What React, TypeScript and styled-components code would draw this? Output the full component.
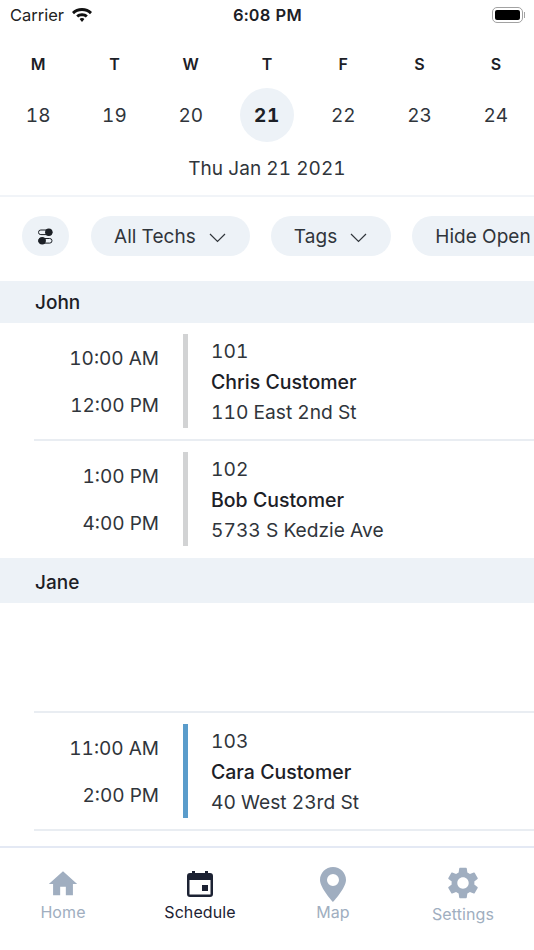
import React from 'react';
import styled, { createGlobalStyle } from 'styled-components';
import { MdHome, MdSettings } from 'react-icons/md';

const days = [
  { letter: 'M', date: 18 },
  { letter: 'T', date: 19 },
  { letter: 'W', date: 20 },
  { letter: 'T', date: 21, active: true },
  { letter: 'F', date: 22 },
  { letter: 'S', date: 23 },
  { letter: 'S', date: 24 },
];

type Job = { start: string; end: string; num: string; name: string; address: string; color: string };

const johnJobs: Job[] = [
  { start: '10:00 AM', end: '12:00 PM', num: '101', name: 'Chris Customer', address: '110 East 2nd St', color: '#d2d3d4' },
  { start: '1:00 PM', end: '4:00 PM', num: '102', name: 'Bob Customer', address: '5733 S Kedzie Ave', color: '#d2d3d4' },
];

const janeJobs: Job[] = [
  { start: '11:00 AM', end: '2:00 PM', num: '103', name: 'Cara Customer', address: '40 West 23rd St', color: '#5a9ccb' },
];

const JobRow = ({ job }: { job: Job }) => (
  <Row>
    <Times>
      <span>{job.start}</span>
      <span>{job.end}</span>
    </Times>
    <Bar $color={job.color} />
    <Details>
      <JobLine>{job.num}</JobLine>
      <JobName>{job.name}</JobName>
      <JobLine>{job.address}</JobLine>
    </Details>
  </Row>
);

const CalendarIcon = () => (
  <svg width="26" height="26" viewBox="0 0 26 26" fill="currentColor">
    <rect x="5" y="0" width="3" height="4" />
    <rect x="18" y="0" width="3" height="4" />
    <path fillRule="evenodd" d="M3 2h20a3 3 0 0 1 3 3v18a3 3 0 0 1-3 3H3a3 3 0 0 1-3-3V5a3 3 0 0 1 3-3zM2.500 9v14.500h21V9z" />
    <rect x="15" y="14" width="6" height="6" />
  </svg>
);

const PinIcon = () => (
  <svg width="26" height="35" viewBox="0 0 26 35" fill="currentColor">
    <path fillRule="evenodd" d="M13 0C5.800 0 0 5.800 0 13c0 8 13 22 13 22s13-14 13-22C26 5.800 20.200 0 13 0zm0 7a6 6 0 1 1 0 12 6 6 0 0 1 0-12z" />
  </svg>
);

const App: React.FC = () => {
  return (
    <Phone>
      <GlobalStyle />
      <StatusBar>
        <Carrier>
          Carrier
          <svg width="22" height="16" viewBox="0 0 22 16">
            <path d="M11 1C7 1 3.600 2.500 1 5l2 2.200C5.100 5.200 7.900 4 11 4s5.900 1.200 8 3.200L21 5c-2.600-2.500-6-4-10-4z" fill="#111" />
            <path d="M11 6.200c-2.300 0-4.300.9-5.800 2.300l2 2.100c1-.9 2.300-1.400 3.800-1.400s2.800.5 3.800 1.400l2-2.100c-1.500-1.400-3.500-2.300-5.800-2.300z" fill="#111" />
            <path d="M11 11c-1 0-1.800.4-2.400 1l2.400 3 2.400-3c-.6-.6-1.400-1-2.400-1z" fill="#111" />
          </svg>
        </Carrier>
        <Clock>6:08 PM</Clock>
        <BatteryWrap>
          <Battery>
            <BatteryFill />
          </Battery>
          <BatteryNub />
        </BatteryWrap>
      </StatusBar>

      <Week>
        {days.map((d, i) => (
          <Day key={i}>
            <Letter>{d.letter}</Letter>
            <DateCircle $active={d.active}>{d.date}</DateCircle>
          </Day>
        ))}
      </Week>
      <FullDate>Thu Jan 21 2021</FullDate>

      <Filters>
        <IconPill>
          <svg width="15" height="17" viewBox="0 0 15 17">
            <rect x="0.500" y="2" width="13.500" height="4.600" rx="2.300" fill="none" stroke="#1c2026" strokeWidth="1" />
            <circle cx="10.800" cy="4.200" r="3.700" fill="#1c2026" />
            <rect x="0.500" y="10.500" width="13.500" height="4.600" rx="2.300" fill="none" stroke="#1c2026" strokeWidth="1" />
            <circle cx="4.200" cy="12.800" r="3.700" fill="#1c2026" />
          </svg>
        </IconPill>
        <Pill>
          All Techs
          <Chevron />
        </Pill>
        <Pill>
          Tags
          <Chevron />
        </Pill>
        <Pill>Hide Open</Pill>
      </Filters>

      <SectionHead $height={42}>John</SectionHead>
      {johnJobs.map((job, i) => (
        <React.Fragment key={job.num}>
          <JobRow job={job} />
          {i === 0 && <Divider />}
        </React.Fragment>
      ))}

      <SectionHead $height={45} $offset={3}>Jane</SectionHead>
      <EmptySlot />
      <Divider />
      {janeJobs.map(job => (
        <JobRow key={job.num} job={job} />
      ))}
      <Divider />

      <TabBar>
        <Tab>
          <IconSlot>
            <MdHome size={34} />
          </IconSlot>
          <TabLabel>Home</TabLabel>
        </Tab>
        <Tab $active>
          <IconSlot>
            <CalendarIcon />
          </IconSlot>
          <TabLabel>Schedule</TabLabel>
        </Tab>
        <Tab>
          <IconSlot>
            <PinIcon />
          </IconSlot>
          <TabLabel>Map</TabLabel>
        </Tab>
        <Tab>
          <IconSlot $nudge={-1}>
            <MdSettings size={38} />
          </IconSlot>
          <TabLabel $low>Settings</TabLabel>
        </Tab>
      </TabBar>
    </Phone>
  );
};

const Chevron = () => (
  <ChevronIcon width="17" height="10" viewBox="0 0 17 10">
    <path d="M1 1l7.500 7.500L16 1" fill="none" stroke="#30353b" strokeWidth="1.200" />
  </ChevronIcon>
);

export default App;

const GlobalStyle = createGlobalStyle`
  html, body {
    margin: 0;
    padding: 0;
    background: #fff;
  }
  * {
    box-sizing: border-box;
  }
`;

const Phone = styled.div`
  width: 534px;
  height: 950px;
  overflow: hidden;
  display: flex;
  flex-direction: column;
  font-family: Inter, 'Liberation Sans', sans-serif;
  font-variant-numeric: tabular-nums;
  color: #1c2026;
  background: #fff;
`;

const StatusBar = styled.div`
  height: 30px;
  flex: none;
  display: flex;
  align-items: center;
  justify-content: space-between;
  padding: 0 9px 0 10px;
`;

const Carrier = styled.div`
  width: 120px;
  display: flex;
  align-items: center;
  gap: 7px;
  font-size: 16.500px;
  color: #222;
`;

const Clock = styled.div`
  font-size: 16.500px;
  font-weight: 600;
  letter-spacing: 0.3px;
`;

const BatteryWrap = styled.div`
  width: 120px;
  display: flex;
  align-items: center;
  justify-content: flex-end;
  gap: 1px;
`;

const Battery = styled.div`
  width: 31px;
  height: 16px;
  padding: 2px;
  border: 1px solid #a2a2a2;
  border-radius: 5px;
`;

const BatteryFill = styled.div`
  height: 100%;
  background: #000;
  border-radius: 2px;
`;

const BatteryNub = styled.div`
  width: 1px;
  height: 6px;
  background: #a2a2a2;
`;

const Week = styled.div`
  display: grid;
  grid-template-columns: repeat(7, 1fr);
  padding-top: 24px;
  flex: none;
`;

const Day = styled.div`
  display: flex;
  flex-direction: column;
  align-items: center;
`;

const Letter = styled.div`
  height: 20px;
  line-height: 20px;
  font-size: 16px;
  font-weight: 600;
`;

const DateCircle = styled.div<{ $active?: boolean }>`
  width: 54px;
  height: 54px;
  margin-top: 14px;
  border-radius: 50%;
  display: flex;
  align-items: center;
  justify-content: center;
  font-size: 19px;
  font-weight: ${p => (p.$active ? 700 : 400)};
  letter-spacing: ${p => (p.$active ? '0.6px' : '0')};
  color: ${p => (p.$active ? '#1c2026' : '#30353b')};
  background: ${p => (p.$active ? '#edf2f7' : 'transparent')};
`;

const FullDate = styled.div`
  flex: none;
  height: 55px;
  padding-top: 15px;
  line-height: 24px;
  text-align: center;
  font-size: 19px;
  letter-spacing: 0.05px;
  color: #30353b;
  border-bottom: 2px solid #f1f4f8;
`;

const Filters = styled.div`
  flex: none;
  height: 84px;
  padding: 19px 0 0 22px;
  display: flex;
  align-items: flex-start;
  gap: 21px;
  overflow: hidden;
`;

const Pill = styled.div`
  flex: none;
  height: 40px;
  padding: 0 23px;
  display: flex;
  align-items: center;
  gap: 13px;
  border-radius: 20px;
  background: #edf2f7;
  font-size: 19px;
  letter-spacing: 0.05px;
  color: #30353b;
  white-space: nowrap;
`;

const IconPill = styled(Pill)`
  width: 47px;
  margin-right: 1px;
  padding: 0;
  justify-content: center;
`;

const ChevronIcon = styled.svg`
  margin-top: 4px;
  margin-right: 1px;
`;

const SectionHead = styled.div<{ $height: number; $offset?: number }>`
  flex: none;
  height: ${p => p.$height}px;
  padding-left: 35px;
  padding-top: ${p => p.$offset ?? 0}px;
  display: flex;
  align-items: center;
  font-size: 19px;
  font-weight: 500;
  background: #edf2f7;
`;

const Row = styled.div`
  flex: none;
  height: 117px;
  padding: 11px 0 12px 35px;
  display: flex;
`;

const Times = styled.div`
  width: 124px;
  padding: 13px 0 11px;
  display: flex;
  flex-direction: column;
  justify-content: space-between;
  align-items: flex-end;
  font-size: 19px;
  line-height: 23px;
  color: #30353b;
`;

const Bar = styled.div<{ $color: string }>`
  width: 5px;
  margin-left: 24px;
  background: ${p => p.$color};
`;

const Details = styled.div`
  margin: 5px 0 4px 23px;
  display: flex;
  flex-direction: column;
  justify-content: space-between;
`;

const JobLine = styled.div`
  font-size: 19.200px;
  line-height: 24px;
  color: #30353b;
`;

const JobName = styled.div`
  font-size: 19.500px;
  line-height: 24px;
  font-weight: 500;
  color: #1c2026;
`;

const Divider = styled.div`
  flex: none;
  height: 2px;
  margin-top: -1px;
  margin-left: 34px;
  background: #e9edf2;
`;

const EmptySlot = styled.div`
  flex: none;
  height: 109px;
`;

const TabBar = styled.div`
  flex: none;
  margin-top: 15px;
  height: 104px;
  padding-top: 16px;
  display: grid;
  grid-template-columns: 126px 148px 118px 142px;
  border-top: 2px solid #e4e9f4;
`;

const Tab = styled.div<{ $active?: boolean }>`
  height: 70px;
  display: flex;
  flex-direction: column;
  align-items: center;
  color: ${p => (p.$active ? '#1c2233' : '#a0aec0')};
`;

const IconSlot = styled.div<{ $nudge?: number }>`
  height: 40px;
  flex: none;
  display: flex;
  align-items: center;
  justify-content: center;
  margin-top: ${p => p.$nudge ?? 0}px;
`;

const TabLabel = styled.span<{ $low?: boolean }>`
  line-height: 20px;
  font-size: 16px;
  letter-spacing: 0.1px;
  margin-top: ${p => (p.$low ? 1 : -2)}px;
`;
